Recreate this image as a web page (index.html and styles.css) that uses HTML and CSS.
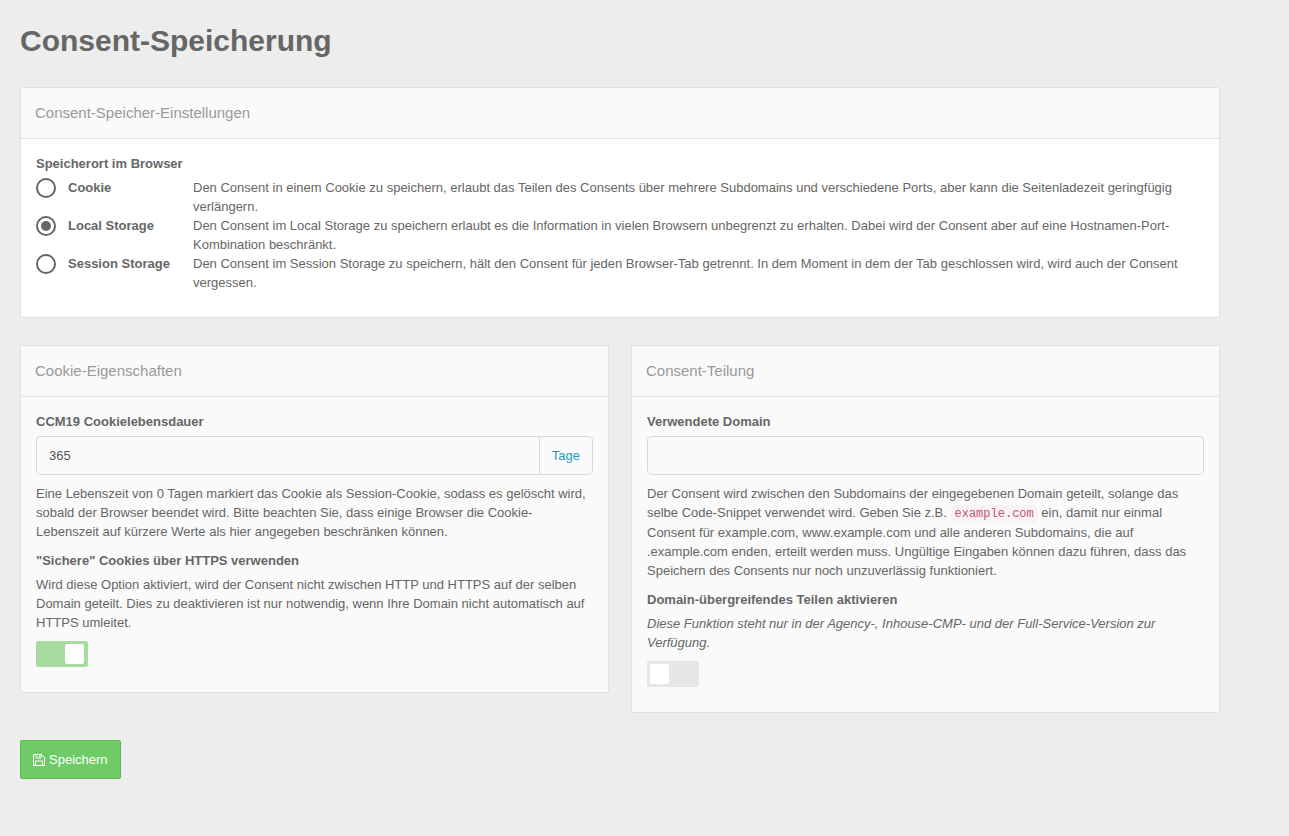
FILE: index.html
```html
<!DOCTYPE html>
<html lang="de">
<head>
<meta charset="utf-8">
<meta name="viewport" content="width=device-width, initial-scale=1">
<title>Consent-Speicherung</title>
<link rel="stylesheet" href="styles.css">
</head>
<body>
<main class="page">
  <h1 class="page-title">Consent-Speicherung</h1>
  <form class="settings">
    <section class="panel panel-light">
      <h2 class="panel-header">Consent-Speicher-Einstellungen</h2>
      <fieldset class="panel-body storage">
        <legend class="field-label">Speicherort im Browser</legend>
        <div class="option">
          <input class="radio" type="radio" name="storage" id="storage-cookie">
          <label class="option-name" for="storage-cookie">Cookie</label>
          <p class="option-text">Den Consent in einem Cookie zu speichern, erlaubt das Teilen des Consents über mehrere Subdomains und verschiedene Ports, aber kann die Seitenladezeit geringfügig verlängern.</p>
        </div>
        <div class="option">
          <input class="radio" type="radio" name="storage" id="storage-local" checked>
          <label class="option-name" for="storage-local">Local Storage</label>
          <p class="option-text">Den Consent im Local Storage zu speichern erlaubt es die Information in vielen Browsern unbegrenzt zu erhalten. Dabei wird der Consent aber auf eine Hostnamen-Port-Kombination beschränkt.</p>
        </div>
        <div class="option">
          <input class="radio" type="radio" name="storage" id="storage-session">
          <label class="option-name" for="storage-session">Session Storage</label>
          <p class="option-text">Den Consent im Session Storage zu speichern, hält den Consent für jeden Browser-Tab getrennt. In dem Moment in dem der Tab geschlossen wird, wird auch der Consent vergessen.</p>
        </div>
      </fieldset>
    </section>

    <div class="columns">
      <section class="panel">
        <h2 class="panel-header">Cookie-Eigenschaften</h2>
        <div class="panel-body">
          <div class="field">
            <label class="field-label" for="lifetime">CCM19 Cookielebensdauer</label>
            <div class="input-group">
              <input class="text-input" type="text" id="lifetime" value="365">
              <span class="input-addon">Tage</span>
            </div>
            <p class="help">Eine Lebenszeit von 0 Tagen markiert das Cookie als Session-Cookie, sodass es gelöscht wird, sobald der Browser beendet wird. Bitte beachten Sie, dass einige Browser die Cookie-Lebenszeit auf kürzere Werte als hier angegeben beschränken können.</p>
          </div>
          <div class="field">
            <label class="field-label" for="secure">"Sichere" Cookies über HTTPS verwenden</label>
            <p class="text">Wird diese Option aktiviert, wird der Consent nicht zwischen HTTP und HTTPS auf der selben Domain geteilt. Dies zu deaktivieren ist nur notwendig, wenn Ihre Domain nicht automatisch auf HTTPS umleitet.</p>
            <input class="switch" type="checkbox" id="secure" checked>
          </div>
        </div>
      </section>

      <section class="panel">
        <h2 class="panel-header">Consent-Teilung</h2>
        <div class="panel-body">
          <div class="field">
            <label class="field-label" for="domain">Verwendete Domain</label>
            <div class="input-group">
              <input class="text-input" type="text" id="domain">
            </div>
            <p class="help">Der Consent wird zwischen den Subdomains der eingegebenen Domain geteilt, solange das selbe Code-Snippet verwendet wird. Geben Sie z.B. <code class="code">example.com</code> ein, damit nur einmal Consent für example.com, www.example.com und alle anderen Subdomains, die auf .example.com enden, erteilt werden muss. Ungültige Eingaben können dazu führen, dass das Speichern des Consents nur noch unzuverlässig funktioniert.</p>
          </div>
          <div class="field">
            <label class="field-label" for="sharing">Domain-übergreifendes Teilen aktivieren</label>
            <p class="text note">Diese Funktion steht nur in der Agency-, Inhouse-CMP- und der Full-Service-Version zur Verfügung.</p>
            <input class="switch" type="checkbox" id="sharing">
          </div>
        </div>
      </section>
    </div>

    <button class="save" type="button">
      <svg class="save-icon" viewBox="0 0 12 12" aria-hidden="true">
        <path d="M.5 .5H8.5L11.5 3.5V11.5H.5Z M3 .5V4H8V.5 M2.5 11.5V7H9.5V11.5"/>
        <path d="M6.5 1.5V3"/>
      </svg>
      Speichern
    </button>
  </form>
</main>
</body>
</html>
```
FILE: styles.css
```css
* {
  box-sizing: border-box;
}

body {
  margin: 0;
  background: #ededed;
  color: #666;
  font-family: "Liberation Sans", Arial, sans-serif;
  font-size: 13px;
  line-height: 19px;
}

p {
  margin: 0;
}

.page {
  max-width: 1240px;
  padding: 20px;
}

.page-title {
  margin: 0 0 26px;
  color: #666;
  font-size: 30px;
  line-height: 41px;
}

.settings {
  display: flex;
  flex-direction: column;
  align-items: flex-start;
  gap: 27px;
}

.panel {
  width: 100%;
  background: #fafafa;
  border: 1px solid #e0e0e0;
  border-radius: 2px;
}

.panel-light {
  background: #fff;
}

.panel-header {
  margin: 0;
  padding: 15px 14px;
  background: #fafafa;
  border-bottom: 1px solid #e0e0e0;
  color: #999;
  font-size: 15px;
  font-weight: 400;
  line-height: 20px;
}

.panel-body {
  margin: 0;
  padding: 15px 15px 25px;
  border: 0;
}

.field-label {
  display: block;
  margin-bottom: 5px;
  padding: 0;
  font-weight: 700;
}

.storage .field-label {
  float: left;
  width: 100%;
}

.option {
  clear: both;
  display: grid;
  grid-template-columns: 20px 113px 1fr;
  column-gap: 12px;
  align-items: start;
}

.option-name {
  font-weight: 700;
}

.radio {
  appearance: none;
  width: 20px;
  height: 20px;
  margin: 0;
  border: 2px solid #666;
  border-radius: 50%;
  background: #fff;
}

.radio:checked {
  background: #666;
  background-clip: content-box;
  padding: 3px;
}

.columns {
  display: grid;
  grid-template-columns: 1fr 1fr;
  gap: 22px;
  align-items: start;
  width: 100%;
}

.field + .field {
  margin-top: 10px;
}

.input-group {
  display: flex;
  height: 39px;
  border: 1px solid #d9d9d9;
  border-radius: 4px;
}

.text-input {
  flex: 1;
  min-width: 0;
  padding: 0 12px;
  border: 0;
  background: transparent;
  color: #555;
  font: inherit;
}

.input-addon {
  display: flex;
  align-items: center;
  padding: 0 12px;
  border-left: 1px solid #d9d9d9;
  color: #1ea0bb;
}

.help {
  margin-top: 9px;
}

.note {
  font-style: italic;
}

.code {
  padding: 2px 4px;
  border-radius: 4px;
  background: #f9f2f4;
  color: #c7547a;
  font-family: "Courier", "Liberation Mono", monospace;
  font-size: 12px;
  line-height: 17px;
}

.switch {
  appearance: none;
  display: block;
  width: 52px;
  height: 26px;
  margin: 9px 0 0;
  padding: 3px;
  border-radius: 2px;
  background: #e7e7e7;
}

.switch::before {
  content: "";
  display: block;
  width: 19px;
  height: 20px;
  border-radius: 2px;
  background: #fff;
}

.switch:checked {
  padding-right: 4px;
  background: #a6dd9e;
}

.switch:checked::before {
  margin-left: auto;
}

.save {
  display: flex;
  align-items: center;
  gap: 4px;
  padding: 9px 12px;
  border: 1px solid #5fb656;
  border-radius: 2px;
  background: #6fcb66;
  color: #fff;
  font: inherit;
}

.save-icon {
  width: 12px;
  height: 12px;
  fill: none;
  stroke: currentColor;
}
```
